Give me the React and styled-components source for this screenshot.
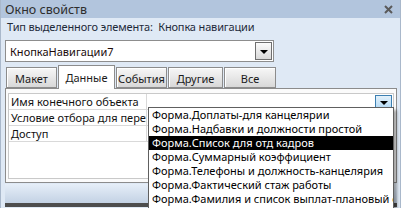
import React from "react";
import styled, { createGlobalStyle } from "styled-components";

const GlobalStyle = createGlobalStyle`
  html, body {
    margin: 0;
    padding: 0;
    background: #ffffff;
  }
  body {
    font-family: "Noto Sans", "Open Sans", sans-serif;
  }
`;

const Window = styled.div`
  position: relative;
  width: 401px;
  height: 208px;
  box-sizing: border-box;
  display: flex;
  flex-direction: column;
  background: #dfe9f5;
  border-left: 1px solid #a9b8cb;
  border-right: 1px solid #a9b8cb;
  overflow: hidden;
`;

const TitleBar = styled.div`
  height: 18px;
  flex: none;
  display: flex;
  align-items: center;
  justify-content: space-between;
  padding: 0 7px 0 4px;
  background: #b2c5dd;
  color: #2e2e2e;
  font-size: 12.5px;
`;

const CloseIcon = () => (
  <svg width="9" height="9" viewBox="0 0 9 9">
    <path d="M1 1L8 8M8 1L1 8" stroke="#5a5a5a" strokeWidth="2" />
  </svg>
);

const Body = styled.div`
  flex: 1;
  display: flex;
  flex-direction: column;
  padding: 0 3px 0 4px;
`;

const TypeLine = styled.div`
  height: 16px;
  margin-top: 1px;
  padding-left: 2px;
  font-size: 11px;
  letter-spacing: -0.15px;
  line-height: 16px;
  color: #1e2a3a;
  white-space: nowrap;
`;

const Combo = styled.div`
  width: 269px;
  height: 22px;
  margin-top: 5px;
  box-sizing: border-box;
  display: flex;
  align-items: center;
  justify-content: space-between;
  padding: 0 1px 0 4px;
  background: #ffffff;
  border: 1px solid #8d8d8d;
  font-size: 11px;
  color: #200a0a;
`;

const ArrowButton = styled.div`
  width: ${(p) => p.$w}px;
  height: ${(p) => p.$h}px;
  box-sizing: border-box;
  display: flex;
  align-items: center;
  justify-content: center;
  border: 1px solid ${(p) => (p.$hot ? "#3c7fb1" : "#6f6f6f")};
  background: ${(p) =>
    p.$hot
      ? "linear-gradient(#e3f1fb, #b9dcf5)"
      : "linear-gradient(#fbfbfb, #d9d9d9)"};
  &::after {
    content: "";
    border-left: 4px solid transparent;
    border-right: 4px solid transparent;
    border-top: 4px solid #000;
    margin-top: ${(p) => (p.$hot ? 3 : 1)}px;
  }
`;

const TabRow = styled.div`
  display: flex;
  align-items: flex-end;
  height: 24px;
  margin-top: 2px;
  padding-left: 1px;
`;

const Tab = styled.div`
  width: ${(p) => p.$w}px;
  height: ${(p) => (p.$active ? 24 : 21)}px;
  box-sizing: border-box;
  display: flex;
  align-items: center;
  justify-content: center;
  margin-right: 1px;
  font-size: 11px;
  color: #1a1a1a;
  border: 1px solid #8c8c8c;
  border-bottom: ${(p) => (p.$active ? "none" : "1px solid #8c8c8c")};
  background: ${(p) =>
    p.$active ? "#ffffff" : "linear-gradient(#f7f7f7, #d8d8d8)"};
  box-shadow: ${(p) => (p.$active ? "none" : "inset 1px 1px 0 #ffffff")};
  padding-top: ${(p) => (p.$active ? 0 : 1)}px;
  position: relative;
  z-index: ${(p) => (p.$active ? 2 : 1)};
  margin-bottom: ${(p) => (p.$active ? -1 : 0)}px;
`;

const Panel = styled.div`
  width: 392px;
  height: 95px;
  box-sizing: border-box;
  padding: 4px 2px 3px 2px;
  background: #fbfbfb;
  border: 1px solid #8c8c8c;
  display: flex;
`;

const Grid = styled.div`
  flex: 1;
  background: #ffffff;
  border: 1px solid #c9c9c9;
`;

const GridRow = styled.div`
  display: grid;
  grid-template-columns: 138px 1fr;
  height: 15px;
  border-bottom: 1px solid #d9d9d9;
  font-size: 11px;
  line-height: 15px;
  color: #111;
`;

const LabelCell = styled.div`
  padding-left: 2px;
  border-right: 1px solid #d9d9d9;
  white-space: nowrap;
  overflow: hidden;
`;

const ValueCell = styled.div`
  display: flex;
  justify-content: flex-end;
  align-items: center;
  padding-right: 1px;
`;

const Footer = styled.div`
  height: 19px;
  margin-top: 1px;
  background: linear-gradient(#e6eef8, #c3d2e4);
  border-bottom: 4px solid #4d4d4d;
`;

const DropList = styled.div`
  position: absolute;
  left: 147px;
  top: 107px;
  width: 246px;
  height: 110px;
  box-sizing: border-box;
  background: #ffffff;
  border: 1px solid #5f5f5f;
  box-shadow: 3px 3px 3px rgba(0, 0, 0, 0.35);
  z-index: 5;
`;

const DropItem = styled.div`
  height: 14px;
  line-height: 14px;
  padding-left: 3px;
  font-size: 11px;
  white-space: nowrap;
  overflow: hidden;
  background: ${(p) => (p.$selected ? "#000000" : "transparent")};
  color: ${(p) => (p.$selected ? "#ffffff" : "#000000")};
`;

const tabs = [
  { label: "Макет", w: 51 },
  { label: "Данные", w: 57, active: true },
  { label: "События", w: 51 },
  { label: "Другие", w: 55 },
  { label: "Все", w: 52 },
];

const rows = ["Имя конечного объекта", "Условие отбора для перехода", "Доступ"];

const forms = [
  "Форма.Доплаты-для канцелярии",
  "Форма.Надбавки и должности простой",
  "Форма.Список для отд кадров",
  "Форма.Суммарный коэффициент",
  "Форма.Телефоны и должность-канцелярия",
  "Форма.Фактический стаж работы",
  "Форма.Фамилия и список выплат-плановый отдел",
];

export default function App() {
  return (
    <>
      <GlobalStyle />
      <Window>
        <TitleBar>
          <span>Окно свойств</span>
          <CloseIcon />
        </TitleBar>
        <Body>
          <TypeLine>Тип выделенного элемента:&nbsp; Кнопка навигации</TypeLine>
          <Combo>
            <span>КнопкаНавигации7</span>
            <ArrowButton $w={17} $h={18} />
          </Combo>
          <TabRow>
            {tabs.map((t) => (
              <Tab key={t.label} $w={t.w} $active={t.active}>
                {t.label}
              </Tab>
            ))}
          </TabRow>
          <Panel>
            <Grid>
              {rows.map((r, i) => (
                <GridRow key={r}>
                  <LabelCell>{r}</LabelCell>
                  <ValueCell>
                    {i === 0 && <ArrowButton $hot $w={17} $h={13} />}
                  </ValueCell>
                </GridRow>
              ))}
            </Grid>
          </Panel>
          <Footer />
        </Body>
        <DropList>
          {forms.map((f, i) => (
            <DropItem key={f} $selected={i === 2}>
              {f}
            </DropItem>
          ))}
        </DropList>
      </Window>
    </>
  );
}
